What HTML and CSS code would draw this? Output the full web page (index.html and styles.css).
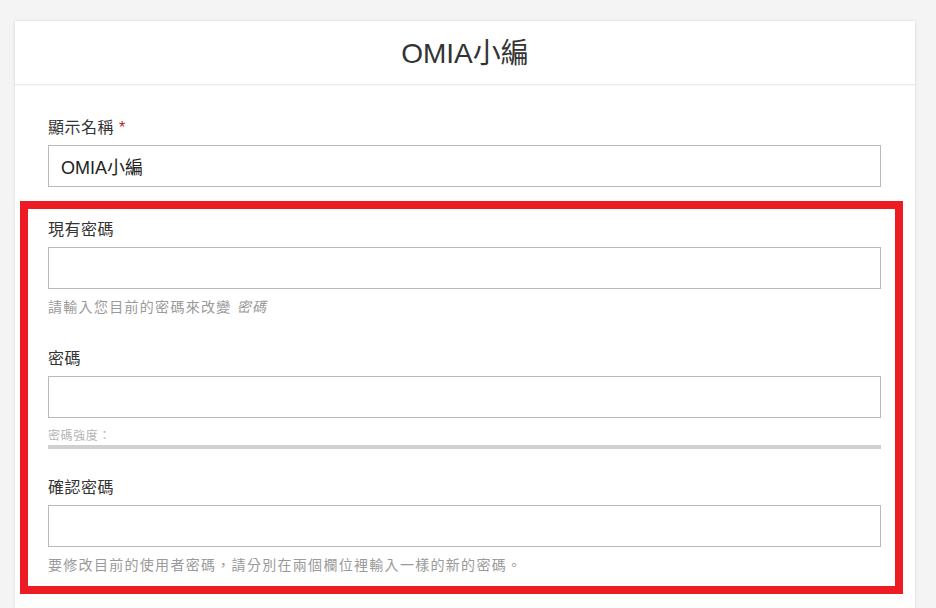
FILE: index.html
```html
<!DOCTYPE html>
<html lang="zh-Hant">
<head>
    <meta charset="UTF-8">
    <meta name="viewport" content="width=device-width, initial-scale=1.0">
    <title>OMIA小編</title>
    <link rel="stylesheet" href="styles.css">
</head>
<body>

    <div class="card">

        <div class="card-header">
            <h2>OMIA小編</h2>
        </div>

        <div class="card-body">

            <div class="form-group">
                <label for="display-name">顯示名稱 <span class="required">*</span></label>
                <input type="text" id="display-name" class="form-input" value="OMIA小編">
            </div>

            <div class="highlight">

                <div class="form-group group-current">
                    <label for="current-pass">現有密碼</label>
                    <input type="password" id="current-pass" class="form-input">
                    <p class="help">請輸入您目前的密碼來改變 <em>密碼</em></p>
                </div>

                <div class="form-group group-new">
                    <label for="new-pass">密碼</label>
                    <input type="password" id="new-pass" class="form-input">
                    <div class="strength">密碼強度：</div>
                    <div class="strength-bar"></div>
                </div>

                <div class="form-group group-confirm">
                    <label for="confirm-pass">確認密碼</label>
                    <input type="password" id="confirm-pass" class="form-input">
                    <p class="help">要修改目前的使用者密碼，請分別在兩個欄位裡輸入一樣的新的密碼。</p>
                </div>

            </div>

        </div>

    </div>

</body>
</html>
```

FILE: styles.css
```css
body {
    font-family: "Liberation Sans", "Noto Sans CJK TC", sans-serif;
    background-color: #f4f4f4;
    margin: 0;
    padding: 21px 21px 0 15px;
    color: #333;
}

.card {
    background-color: #fff;
    box-shadow: 0 0 3px rgba(0, 0, 0, 0.12);
    min-height: 620px;
}

.card-header {
    height: 63px;
    display: flex;
    align-items: center;
    justify-content: center;
    border-bottom: 1px solid #ebebeb;
    box-shadow: 0 1px 2px rgba(0, 0, 0, 0.04);
}

.card-header h2 {
    margin: 0;
    font-size: 28px;
    font-weight: normal;
    color: #333;
    line-height: 34px;
    padding-top: 2px;
}

.card-body {
    padding: 33px 34px 0 33px;
}

.form-group label {
    display: block;
    font-size: 16px;
    line-height: 20px;
    letter-spacing: 0.5px;
    margin-bottom: 7px;
    color: #333;
}

.required {
    color: #b3262b;
}

.form-input {
    display: block;
    box-sizing: border-box;
    width: 100%;
    height: 42px;
    margin: 0;
    padding: 0 12px;
    border: 1px solid #bababa;
    border-radius: 0;
    font-family: inherit;
    font-size: 18px;
    color: #222;
    outline: none;
}

.help {
    margin: 9px 0 0;
    font-size: 14px;
    line-height: 18px;
    letter-spacing: 1.3px;
    color: #9a9a9a;
}

.help em {
    font-style: italic;
}

.highlight {
    margin: 14px -22px 0 -28px;
    padding: 11px 14px 12px 20px;
    border: 8px solid #ed1c24;
}

.group-current {
    margin-bottom: 33px;
}

.group-new {
    margin-bottom: 29px;
}

.strength {
    margin-top: 10px;
    font-size: 12px;
    line-height: 16px;
    letter-spacing: 0.6px;
    color: #b5b5b5;
}

.strength-bar {
    height: 4px;
    margin-top: 1px;
    background-color: #d0d0d0;
}
```
